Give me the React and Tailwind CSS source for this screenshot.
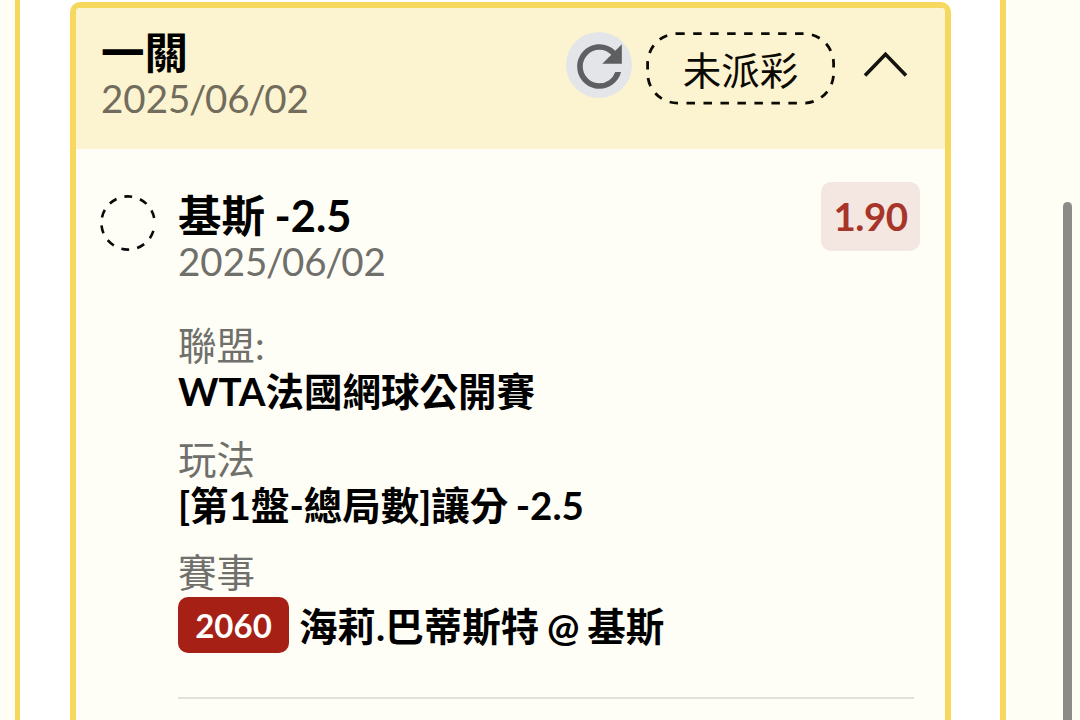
import React from 'react';
import { MdRefresh } from 'react-icons/md';

const ticket = {
    title: '一關',
    date: '2025/06/02',
    status: '未派彩',
    pick: '基斯 -2.5',
    odds: '1.90',
    matchNo: '2060',
    match: '海莉.巴蒂斯特 @ 基斯',
};

const DETAILS = [
    { label: '聯盟:', value: 'WTA法國網球公開賽' },
    { label: '玩法', value: '[第1盤-總局數]讓分 -2.5' },
];

// Slashes sit tighter than the digits
const TicketDate = ({ date }) => {
    const [year, month, day] = date.split('/');
    return (
        <>
            {year}
            <span className="-mx-[1.4px]">/</span>
            {month}
            <span className="-mx-[1.4px]">/</span>
            {day}
        </>
    );
};

const StatusPill = ({ text }) => (
    <div className="relative flex h-[73px] w-[189px] items-center justify-center">
        <svg className="absolute inset-0" width="189" height="73" viewBox="0 0 189 73" fill="none">
            <rect
                x="1.6"
                y="1.6"
                width="186"
                height="69.5"
                rx="30"
                stroke="#0c0a04"
                strokeWidth="2.8"
                strokeDasharray="8.5 8.48"
                strokeDashoffset="1.4"
            />
        </svg>
        <span className="mt-[2px] text-[38.5px] leading-[46px] text-[#0c0a04]">{text}</span>
    </div>
);

const TicketHeader = () => (
    <div className="flex h-[141px] items-start justify-between bg-[#fcf3d0] pl-[25px] pr-[37px] pt-[21px]">
        <div>
            <h1 className="text-[43.5px] font-bold leading-[46px] text-black">{ticket.title}</h1>
            <p className="text-[38.5px] leading-[46px] text-[#716c5c]">
                <TicketDate date={ticket.date} />
            </p>
        </div>
        <div className="flex items-start pt-[3px]">
            <button className="flex size-[66px] items-center justify-center rounded-full bg-[#e4e5e9]">
                <MdRefresh className="mt-[2px] size-[67px] shrink-0 text-[#5e5f61]" />
            </button>
            <div className="ml-[14px]">
                <StatusPill text={ticket.status} />
            </div>
            <svg className="ml-[28px] mt-[18px]" width="45" height="30" viewBox="0 0 45 30" fill="none">
                <path d="M2 25.5L22.5 4.3L43 25.5" stroke="#15130d" strokeWidth="3.6" />
            </svg>
        </div>
    </div>
);

const TicketBody = () => (
    <div className="flex items-start pl-[24px] pr-[25px] pt-[33px]">
        <svg className="mt-[13px] shrink-0" width="56" height="56" viewBox="0 0 56 56" fill="none">
            <circle
                cx="28"
                cy="28"
                r="26.6"
                stroke="#0a0a0a"
                strokeWidth="2.6"
                strokeDasharray="8 8.1"
                strokeDashoffset="-8.1"
            />
        </svg>
        <div className="ml-[22px] flex-1">
            <div className="flex items-start justify-between">
                <div className="pt-[10px]">
                    <h2 className="text-[43.5px] font-bold leading-[46px] text-black [word-spacing:-1px]">{ticket.pick}</h2>
                    <p className="text-[38.5px] leading-[46px] text-[#6f6f6b]">
                        <TicketDate date={ticket.date} />
                    </p>
                </div>
                <span className="flex h-[69px] w-[99px] items-center justify-center rounded-[10px] bg-[#f4e7e1] text-[38.5px] font-bold tracking-[-0.5px] text-[#a7352a]">
                    {ticket.odds}
                </span>
            </div>
            <div className="mt-[38px] text-[38.5px] leading-[46px]">
                {DETAILS.map((item) => (
                    <div key={item.label} className="mb-[22px]">
                        <p className="text-[#6f6f6b]">{item.label}</p>
                        <p className="font-bold text-black [word-spacing:-2px]">{item.value}</p>
                    </div>
                ))}
                <div className="-mt-px">
                    <p className="text-[#6f6f6b]">賽事</p>
                    <div className="mt-[2px] flex items-center">
                        <span className="flex h-[56px] w-[111px] items-center justify-center rounded-[10px] bg-[#a62016] text-[33px] font-bold text-white">
                            {ticket.matchNo}
                        </span>
                        <p className="ml-[10px] mt-[2px] whitespace-nowrap font-bold text-black [word-spacing:-1.5px]">
                            {ticket.match}
                        </p>
                    </div>
                </div>
            </div>
            <div className="mr-[6px] mt-[44px] h-[2px] bg-[#e0e0dc]" />
        </div>
    </div>
);

const App = () => {
    return (
        <div className="flex h-[720px] w-[1080px] overflow-hidden bg-[#fffef5] font-['Lato','Noto_Sans_CJK_TC',sans-serif]">
            <main className="ml-[15px] w-[991px] border-l-[5px] border-r-[6px] border-[#f6d85e] bg-white pl-[50px] pr-[49px] pt-[2px]">
                <section className="h-[760px] overflow-hidden rounded-[10px] border-[6px] border-[#f6d85e] bg-[#fffef6]">
                    <TicketHeader />
                    <TicketBody />
                </section>
            </main>
            <div className="ml-[57px] mt-[202px] h-[560px] w-[9px] rounded-full bg-[#8b8b87]" />
        </div>
    );
};

export default App;
